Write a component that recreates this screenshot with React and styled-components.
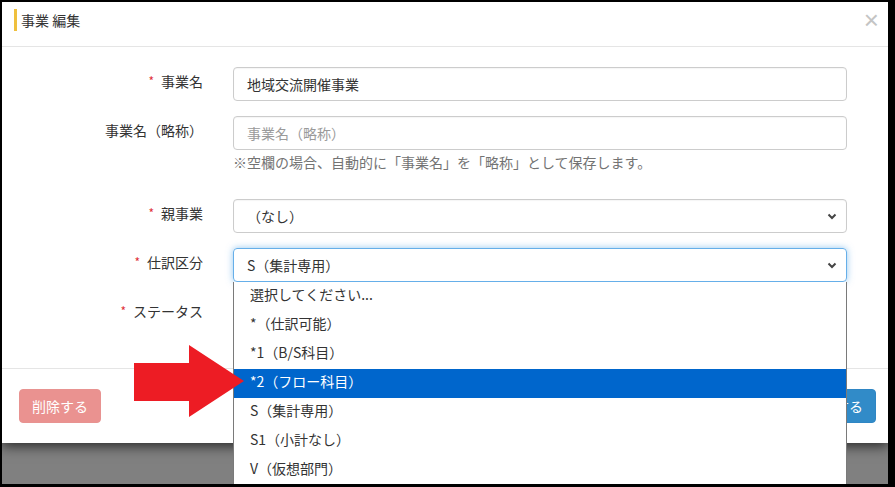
import React from "react";
import styled, { createGlobalStyle } from "styled-components";

const GlobalStyle = createGlobalStyle`
  html, body {
    margin: 0;
    padding: 0;
    background: #000;
  }
  body {
    font-family: "Noto Sans CJK JP", "Noto Sans", sans-serif;
    font-size: 14px;
    color: #333;
  }
`;

const Frame = styled.div`
  position: relative;
  margin: 2px 7px 3px 2px;
  height: 482px;
  background: #808080;
  overflow: hidden;
`;

const Modal = styled.div`
  position: relative;
  height: 441px;
  background: #fff;
  box-shadow: 0 3px 12px rgba(0, 0, 0, 0.7);
  display: flex;
  flex-direction: column;
`;

const Header = styled.div`
  display: flex;
  align-items: flex-start;
  justify-content: space-between;
  padding: 7px 9px 15px 12px;
  border-bottom: 1px solid #e5e5e5;
`;

const Title = styled.h4`
  margin: 0;
  height: 22px;
  line-height: 22px;
  padding-left: 4px;
  border-left: 3px solid #efc03e;
  font-size: 14px;
  font-weight: normal;
  color: #333;
`;

const Close = styled.span`
  font-family: "Liberation Sans", sans-serif;
  font-size: 26px;
  line-height: 22px;
  color: #c4c4c4;
`;

const Body = styled.div`
  padding: 20px 41px 24px 0;
  flex: 1;
`;

const Group = styled.div`
  display: grid;
  grid-template-columns: 201px 1fr;
  column-gap: 30px;
  margin-bottom: ${(p) => p.$gap ?? 15}px;
`;

const Label = styled.label`
  text-align: right;
  padding-top: 4px;
  line-height: 20px;
  font-size: 14px;
  color: #333;
  white-space: nowrap;
`;

const Req = styled.span`
  color: #e0303a;
  font-size: 12px;
  margin-right: 7px;
  position: relative;
  top: -1px;
`;

const Field = styled.div`
  position: relative;
`;

const Input = styled.div`
  box-sizing: border-box;
  height: 34px;
  padding: 0 12px 0 13px;
  display: flex;
  align-items: center;
  justify-content: space-between;
  border: 1px solid ${(p) => (p.$focus ? "#66afe9" : "#ccc")};
  border-radius: 4px;
  box-shadow: ${(p) =>
    p.$focus ? "0 0 7px rgba(102, 175, 233, 0.7)" : "inset 0 1px 1px rgba(0,0,0,.04)"};
  color: ${(p) => (p.$placeholder ? "#9a9a9a" : "#333")};
  line-height: 20px;
  white-space: nowrap;
`;

const Help = styled.div`
  margin-top: 2px;
  line-height: 20px;
  color: #737373;
  font-size: 14px;
  white-space: nowrap;
`;

const Chevron = styled.svg`
  width: 10px;
  height: 10px;
  margin-left: auto;
  margin-right: -3px;
`;

const Dropdown = styled.ul`
  position: absolute;
  z-index: 5;
  left: 0;
  right: 0;
  top: 34px;
  margin: 0;
  padding: 0;
  list-style: none;
  background: #fff;
  border: 1px solid #7a7a7a;
  border-top: none;
`;

const Option = styled.li`
  box-sizing: border-box;
  height: 29px;
  line-height: 25px;
  padding-left: 16px;
  font-size: 14px;
  background: ${(p) => (p.$active ? "#0066cc" : "#fff")};
  color: ${(p) => (p.$active ? "#fff" : "#333")};
  white-space: nowrap;
`;

const Footer = styled.div`
  display: flex;
  justify-content: space-between;
  padding: 20px 12px 20px 17px;
  border-top: 1px solid #e5e5e5;
`;

const Button = styled.button`
  height: 34px;
  padding: 0 12px;
  border: 1px solid ${(p) => (p.$variant === "danger" ? "#e89391" : "#2f86c4")};
  border-radius: 4px;
  background: ${(p) => (p.$variant === "danger" ? "#ea9290" : "#318bc8")};
  color: #fff;
  font-family: inherit;
  font-size: 14px;
  line-height: 20px;
`;

const Arrow = styled.svg`
  position: absolute;
  z-index: 10;
  left: 132px;
  top: 343px;
  width: 110px;
  height: 73px;
`;

const ChevronIcon = () => (
  <Chevron viewBox="0 0 10 10">
    <path d="M1.5 3.5 L5 7 L8.5 3.5" fill="none" stroke="#444" strokeWidth="2" />
  </Chevron>
);

const options = [
  "選択してください...",
  "*（仕訳可能）",
  "*1（B/S科目）",
  "*2（フロー科目）",
  "S（集計専用）",
  "S1（小計なし）",
  "V（仮想部門）",
];

export default function App() {
  return (
    <>
      <GlobalStyle />
      <Frame>
        <Modal>
          <Header>
            <Title>事業 編集</Title>
            <Close>×</Close>
          </Header>
          <Body>
            <Group>
              <Label>
                <Req>*</Req>事業名
              </Label>
              <Field>
                <Input>地域交流開催事業</Input>
              </Field>
            </Group>
            <Group $gap={27}>
              <Label>事業名（略称）</Label>
              <Field>
                <Input $placeholder>事業名（略称）</Input>
                <Help>※空欄の場合、自動的に「事業名」を「略称」として保存します。</Help>
              </Field>
            </Group>
            <Group>
              <Label>
                <Req>*</Req>親事業
              </Label>
              <Field>
                <Input>
                  （なし）
                  <ChevronIcon />
                </Input>
              </Field>
            </Group>
            <Group>
              <Label>
                <Req>*</Req>仕訳区分
              </Label>
              <Field>
                <Input $focus>
                  S（集計専用）
                  <ChevronIcon />
                </Input>
                <Dropdown>
                  {options.map((o, i) => (
                    <Option key={o} $active={i === 3}>
                      {o}
                    </Option>
                  ))}
                </Dropdown>
              </Field>
            </Group>
            <Group $gap={0}>
              <Label>
                <Req>*</Req>ステータス
              </Label>
              <Field>
                <Input>
                  <ChevronIcon />
                </Input>
              </Field>
            </Group>
          </Body>
          <Footer>
            <Button $variant="danger">削除する</Button>
            <Button $variant="primary">更新する</Button>
          </Footer>
        </Modal>
        <Arrow viewBox="0 0 110 73">
          <polygon points="0,18 55,18 55,0 110,36 55,72 55,56 0,56" fill="#ed1c24" />
        </Arrow>
      </Frame>
    </>
  );
}
